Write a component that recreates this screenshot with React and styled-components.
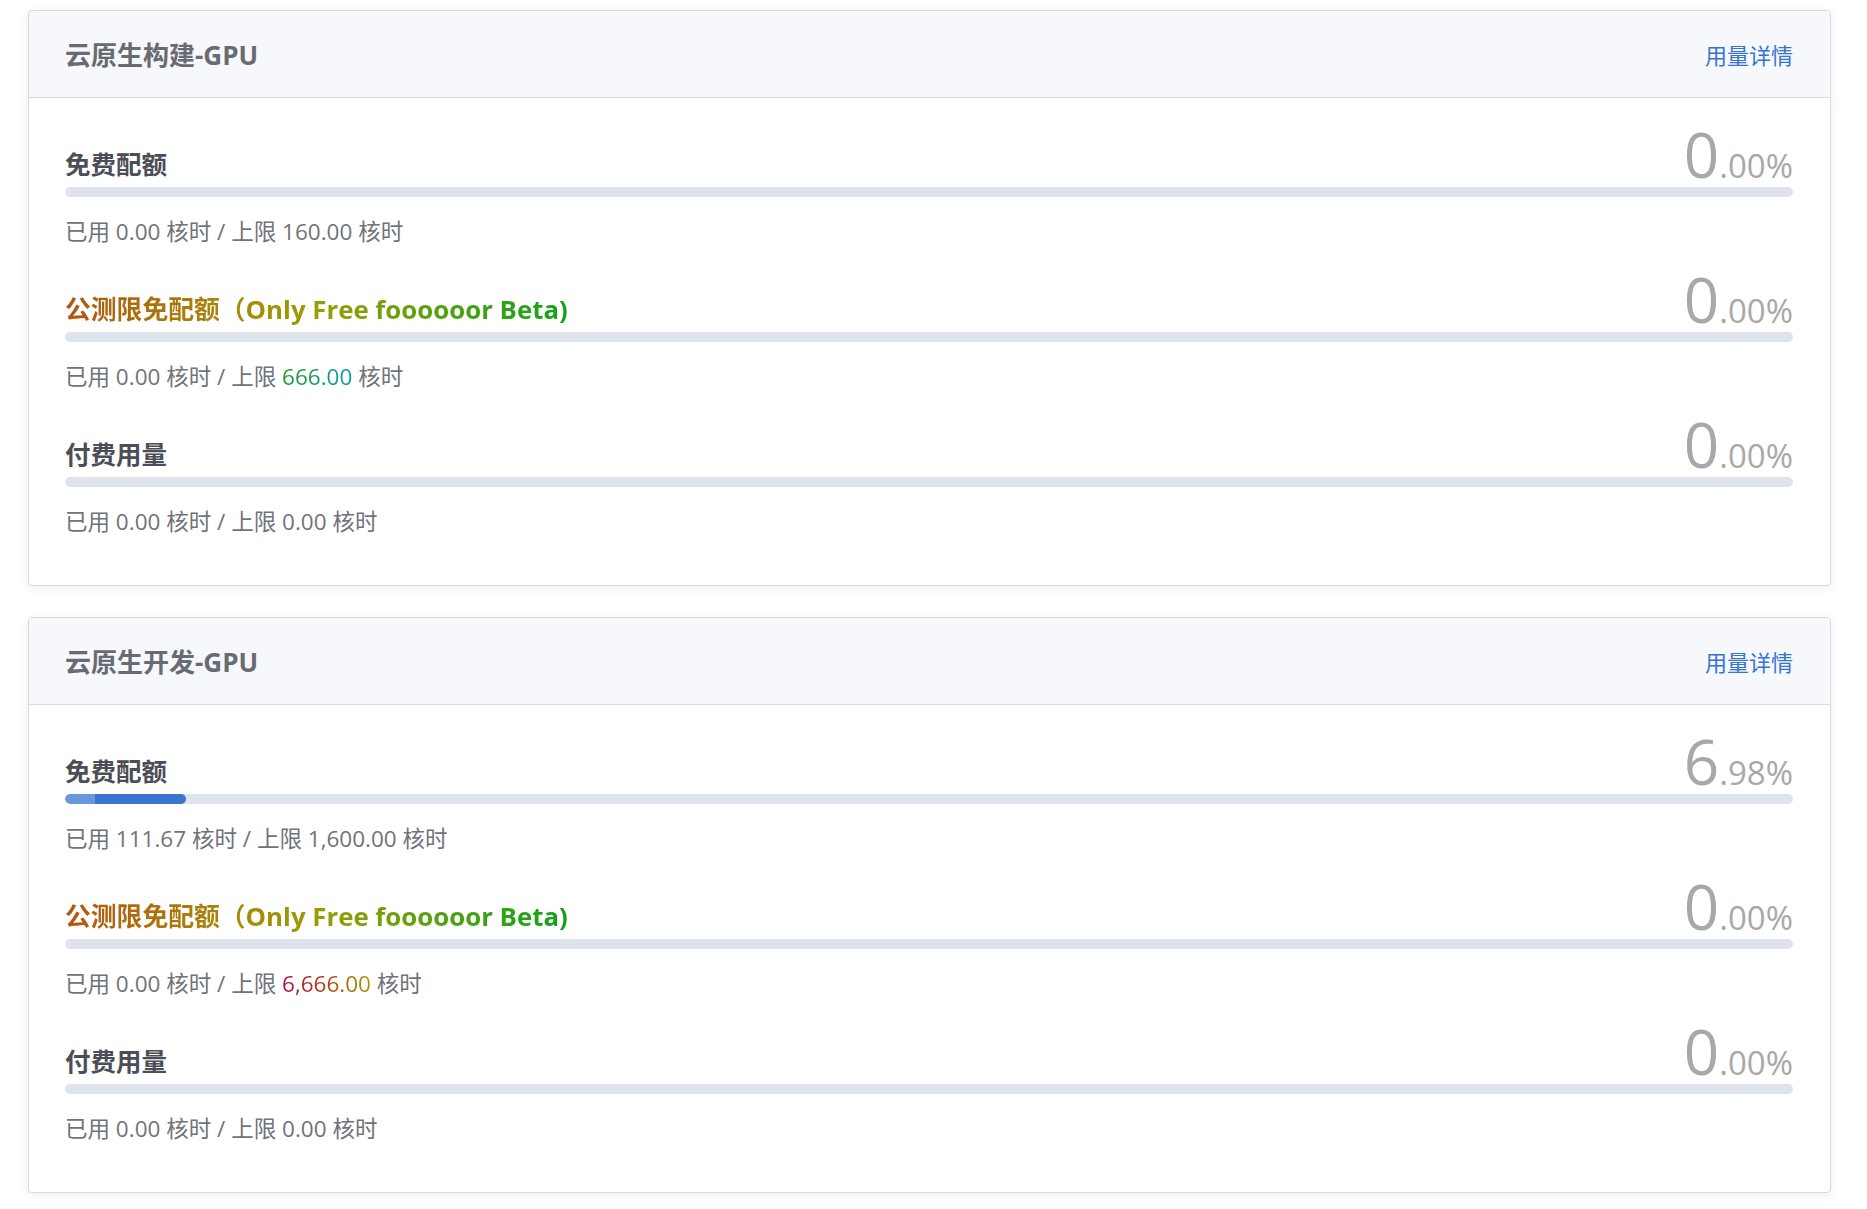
import React from "react";
import styled, { createGlobalStyle } from "styled-components";

const GlobalStyle = createGlobalStyle`
  body {
    margin: 0;
    background: #fff;
    font-family: "Open Sans", "Noto Sans CJK SC", sans-serif;
  }
`;

const Page = styled.div`
  padding: 10px 36px 18px 28px;
  display: flex;
  flex-direction: column;
  gap: 31px;
`;

const Card = styled.section`
  background: #fff;
  border: 1px solid #d6d9e4;
  border-radius: 4px;
  box-shadow: 0 2px 10px rgba(30, 40, 70, 0.08);
  overflow: hidden;
`;

const CardHeader = styled.header`
  height: 86px;
  background: #f7f8fc;
  border-bottom: 1px solid #d6d9e4;
  display: flex;
  align-items: center;
  justify-content: space-between;
  padding: 0 37px 0 36px;
`;

const CardTitle = styled.h2`
  margin: 0;
  font-size: 26px;
  font-weight: 700;
  color: #686b72;
`;

const DetailLink = styled.a`
  font-size: 22px;
  color: #3574d4;
  text-decoration: none;
  cursor: pointer;
`;

const CardBody = styled.div`
  padding: 41px 37px 49px 36px;
  display: flex;
  flex-direction: column;
  gap: 38px;
`;

const Row = styled.div`
  display: flex;
  flex-direction: column;
`;

const TitleRow = styled.div`
  height: 48px;
  display: flex;
  justify-content: space-between;
  align-items: flex-end;
`;

const RowTitle = styled.span`
  font-size: ${(p) => (p.$gradient ? "25.8px" : "25.5px")};
  font-weight: 700;
  line-height: 34px;
  margin-bottom: 6px;
  color: #4b4e55;
  ${(p) =>
    p.$gradient &&
    `
    background: linear-gradient(90deg, #b3560f 0%, #a9840a 30%, #9b9d02 50%, #5aa10d 72%, #0fa21c 100%);
    -webkit-background-clip: text;
    background-clip: text;
    color: transparent;
  `}
`;

const Percent = styled.span`
  font-size: 62px;
  font-weight: 400;
  line-height: 1;
  margin-bottom: 2px;
  color: #a8a8aa;
  white-space: nowrap;
`;

const PercentTail = styled.span`
  font-size: 33px;
`;

const Track = styled.div`
  height: 10px;
  border-radius: 5px;
  background: #dfe3ec;
  overflow: hidden;
`;

const Fill = styled.div`
  height: 100%;
  border-radius: 5px;
  background: linear-gradient(90deg, #6a98dc 0, #6a98dc 30px, #3a76cf 30px, #3a76cf 100%);
`;

const Detail = styled.div`
  margin-top: 21px;
  font-size: 22.5px;
  line-height: 28px;
  color: #707379;
`;

const Accent = styled.span`
  background: ${(p) => p.$gradient};
  -webkit-background-clip: text;
  background-clip: text;
  color: transparent;
`;

const GREEN_TEAL = "linear-gradient(90deg, #1f9a22, #0d98ab)";
const RED_OLIVE = "linear-gradient(90deg, #b20d4f, #b33a10 45%, #a5a000)";

const UsageRow = ({ title, gradient, percent, used, limit, limitGradient }) => {
  const [whole, frac] = percent.toFixed(2).split(".");
  return (
    <Row>
      <TitleRow>
        <RowTitle $gradient={gradient}>{title}</RowTitle>
        <Percent>
          {whole}
          <PercentTail>.{frac}%</PercentTail>
        </Percent>
      </TitleRow>
      <Track>
        {percent > 0 && <Fill style={{ width: `${percent}%` }} />}
      </Track>
      <Detail>
        已用 {used} 核时 / 上限{" "}
        {limitGradient ? <Accent $gradient={limitGradient}>{limit}</Accent> : limit} 核时
      </Detail>
    </Row>
  );
};

const BETA = "公测限免配额（Only Free foooooor Beta)";

const cards = [
  {
    name: "云原生构建-GPU",
    rows: [
      { title: "免费配额", percent: 0, used: "0.00", limit: "160.00" },
      { title: BETA, gradient: true, percent: 0, used: "0.00", limit: "666.00", limitGradient: GREEN_TEAL },
      { title: "付费用量", percent: 0, used: "0.00", limit: "0.00" },
    ],
  },
  {
    name: "云原生开发-GPU",
    rows: [
      { title: "免费配额", percent: 6.98, used: "111.67", limit: "1,600.00" },
      { title: BETA, gradient: true, percent: 0, used: "0.00", limit: "6,666.00", limitGradient: RED_OLIVE },
      { title: "付费用量", percent: 0, used: "0.00", limit: "0.00" },
    ],
  },
];

export default function App() {
  return (
    <>
      <GlobalStyle />
      <Page>
        {cards.map((card) => (
          <Card key={card.name}>
            <CardHeader>
              <CardTitle>{card.name}</CardTitle>
              <DetailLink>用量详情</DetailLink>
            </CardHeader>
            <CardBody>
              {card.rows.map((row, i) => (
                <UsageRow key={i} {...row} />
              ))}
            </CardBody>
          </Card>
        ))}
      </Page>
    </>
  );
}
